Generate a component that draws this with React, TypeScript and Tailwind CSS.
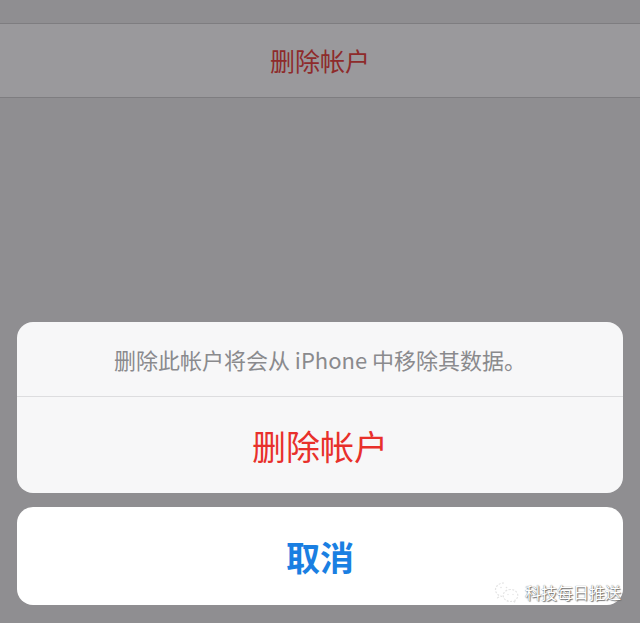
function WeChatMark() {
  return (
    <svg width="26" height="22" viewBox="0 0 26 22" fill="none" stroke="#e4e4e4" strokeWidth="1.2" strokeDasharray="2 1.4">
      <path d="M10 2C5.3 2 1.5 5 1.5 8.8c0 2.2 1.2 4 3.1 5.3l-.8 2.5 2.9-1.5c1 .3 2.1.5 3.3.5" />
      <path d="M16.5 8.5c-4.1 0-7.3 2.7-7.3 6s3.2 6 7.3 6c.9 0 1.8-.1 2.6-.4l2.4 1.3-.6-2.1c1.7-1.1 2.900-2.8 2.9-4.8 0-3.3-3.2-6-7.3-6z" />
      <circle cx="7" cy="6.5" r=".8" fill="#e4e4e4" stroke="none" />
      <circle cx="12.5" cy="6.5" r=".8" fill="#e4e4e4" stroke="none" />
      <circle cx="14" cy="13.5" r=".7" fill="#e4e4e4" stroke="none" />
      <circle cx="19" cy="13.5" r=".7" fill="#e4e4e4" stroke="none" />
    </svg>
  )
}

export default function App() {
  return (
    <div className="relative h-[623px] w-[640px] overflow-hidden bg-[#8f8e91] font-['Noto_Sans_CJK_SC',sans-serif]">
      {/* dimmed settings row behind the sheet */}
      <div className="h-[23px]" />
      <div className="flex h-[75px] items-center justify-center border-y border-[#7e7d80] bg-[#9a999c] text-[25px] text-[#8e2b2b]">
        删除帐户
      </div>

      {/* action sheet */}
      <div className="mt-[224px] flex flex-col gap-[14px] px-[17px]">
        <div className="overflow-hidden rounded-[16px] bg-[#f7f7f8]">
          <div className="flex h-[75px] items-center justify-center border-b border-[#dddddf] text-[22px] text-[#8a8a8d]">
            删除此帐户将会从 iPhone 中移除其数据。
          </div>
          <div className="flex h-[96px] items-center justify-center text-[34px] text-[#e8302b]">删除帐户</div>
        </div>
        <div className="flex h-[98px] items-center justify-center rounded-[16px] bg-white text-[34px] font-bold text-[#1a7fe2]">
          取消
        </div>
      </div>

      {/* watermark */}
      <div className="absolute left-[494px] top-[581px] flex items-center gap-[5px]">
        <WeChatMark />
        <span className="text-[16px] leading-none text-white [text-shadow:0_0_1px_#555,1px_1px_1px_#777]">科技每日推送</span>
      </div>
    </div>
  )
}
